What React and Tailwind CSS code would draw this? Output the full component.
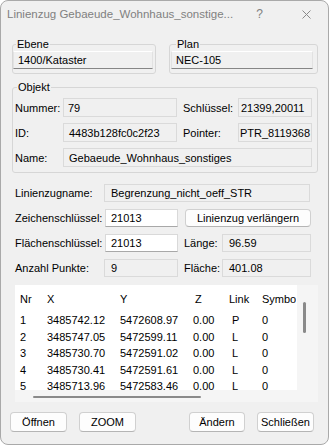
import React from "react";

const rows = [
  ["1", "3485742.12", "5472608.97", "0.00", "P", "0"],
  ["2", "3485747.05", "5472599.11", "0.00", "L", "0"],
  ["3", "3485730.70", "5472591.02", "0.00", "L", "0"],
  ["4", "3485730.41", "5472591.61", "0.00", "L", "0"],
  ["5", "3485713.96", "5472583.46", "0.00", "L", "0"],
];

// read-only field (grey, flat)
function RoField({ className = "", children }) {
  return (
    <div
      className={
        "flex items-center overflow-hidden whitespace-nowrap bg-[#f0f0f0] border border-[#dadada] " +
        className
      }
    >
      {children}
    </div>
  );
}

function WhiteField({ className = "", children }) {
  return (
    <div
      className={
        "flex items-center overflow-hidden whitespace-nowrap bg-white border border-[#d9d9d9] border-b-[#a8a8a8] " +
        className
      }
    >
      {children}
    </div>
  );
}

function Button({ className = "", children }) {
  return (
    <div
      className={
        "flex items-center justify-center bg-[#fdfdfd] border border-[#d0d0d0] border-b-[#b5b5b5] rounded-[4px] whitespace-nowrap " +
        className
      }
    >
      {children}
    </div>
  );
}

export default function App() {
  return (
    <div className="w-[329px] h-[445px] flex flex-col bg-[#f0f0f0] border border-[#a9a9a9] rounded-[8px] overflow-hidden text-[11px] leading-[14px] text-black font-['Liberation_Sans',Arial,sans-serif]">
      {/* title bar */}
      <div className="h-[26px] flex items-center pl-[6px] pr-[17px] text-[11.5px] text-[#808080]">
        <span className="whitespace-nowrap">Linienzug Gebaeude_Wohnhaus_sonstige...</span>
        <span className="ml-auto text-[12px]">?</span>
        <svg className="ml-[39px]" width="9" height="9" viewBox="0 0 9 9">
          <path d="M0.5 0.5 L8.5 8.5 M8.5 0.5 L0.5 8.5" stroke="#8a8a8a" strokeWidth="1" />
        </svg>
      </div>

      <div className="pl-[11px] pr-[10px] mt-[10px]">
        {/* Ebene / Plan */}
        <div className="flex gap-[13px]">
          <fieldset className="w-[144px] border border-[#d6d6d6] rounded-[3px] pl-0 pr-[2px] pb-[4px]">
            <legend className="ml-[3px] px-[1px] leading-[14px]">Ebene</legend>
            <div className="h-[18px] flex items-center pl-[4px] bg-[#f0f0f0] border border-[#e2e2e2] border-t-white border-b-[#868686]">
              1400/Kataster
            </div>
          </fieldset>
          <fieldset className="flex-1 border border-[#d6d6d6] rounded-[3px] pl-[1px] pr-[4px] pb-[4px]">
            <legend className="ml-[5px] px-[1px] leading-[14px]">Plan</legend>
            <div className="h-[18px] flex items-center pl-[4px] bg-[#f0f0f0] border border-[#e2e2e2] border-t-white border-b-[#868686]">
              NEC-105
            </div>
          </fieldset>
        </div>

        {/* Objekt */}
        <fieldset className="mt-[6px] border border-[#d6d6d6] rounded-[3px] pl-[2px] pr-[5px] pt-[4px] pb-[5px]">
          <legend className="ml-[2px] px-[1px] leading-[14px]">Objekt</legend>
          <div className="flex flex-col gap-[6px]">
            <div className="flex items-center">
              <span className="w-[48px]">Nummer:</span>
              <RoField className="w-[114px] h-[19px] pl-[4px]">79</RoField>
              <span className="ml-[6px] w-[55px]">Schlüssel:</span>
              <RoField className="w-[74px] h-[19px] pl-[2px]">21399,20011</RoField>
            </div>
            <div className="flex items-center">
              <span className="w-[48px]">ID:</span>
              <RoField className="w-[114px] h-[19px] pl-[5px]">4483b128fc0c2f23</RoField>
              <span className="ml-[6px] w-[55px]">Pointer:</span>
              <RoField className="w-[74px] h-[19px] justify-end pr-[1px]">PTR_8119368</RoField>
            </div>
            <div className="flex items-center">
              <span className="w-[48px]">Name:</span>
              <RoField className="flex-1 h-[19px] pl-[5px]">Gebaeude_Wohnhaus_sonstiges</RoField>
            </div>
          </div>
        </fieldset>

        {/* Linienzug */}
        <div className="mt-[11px] pl-[3px] flex flex-col gap-[7px]">
          <div className="flex items-center h-[18px]">
            <span className="w-[89px]">Linienzugname:</span>
            <RoField className="w-[206px] h-[18px] pl-[6px]">Begrenzung_nicht_oeff_STR</RoField>
          </div>
          <div className="flex items-center h-[18px]">
            <span className="w-[89px]">Zeichenschlüssel:</span>
            <WhiteField className="ml-[1px] w-[73px] h-[18px] pl-[5px]">21013</WhiteField>
            <Button className="ml-[7px] w-[126px] h-[18px]">Linienzug verlängern</Button>
          </div>
          <div className="flex items-center h-[18px]">
            <span className="w-[89px]">Flächenschlüssel:</span>
            <WhiteField className="ml-[1px] w-[73px] h-[18px] pl-[5px]">21013</WhiteField>
            <span className="ml-[6px] w-[38px]">Länge:</span>
            <RoField className="w-[89px] h-[18px] pl-[6px]">96.59</RoField>
          </div>
          <div className="flex items-center h-[18px]">
            <span className="w-[89px]">Anzahl Punkte:</span>
            <RoField className="w-[74px] h-[18px] pl-[6px]">9</RoField>
            <span className="ml-[6px] w-[38px]">Fläche:</span>
            <RoField className="w-[89px] h-[18px] pl-[6px]">401.08</RoField>
          </div>
        </div>

        {/* point list */}
        <div className="relative mt-[8px] ml-[3px] w-[303px] h-[117px] bg-[#f5f5f5]">
          <div className="w-[282px] h-[105px] bg-white overflow-hidden">
            <div className="h-[27px] flex items-center pl-[5px] whitespace-nowrap">
              <span className="w-[27px]">Nr</span>
              <span className="w-[73px]">X</span>
              <span className="w-[73px]">Y</span>
              <span className="w-[36px] pl-[2px]">Z</span>
              <span className="w-[33px]">Link</span>
              <span className="w-[34px] overflow-hidden">Symbo</span>
            </div>
            {rows.map((r) => (
              <div key={r[0]} className="h-[16.5px] flex items-center pl-[5px] whitespace-nowrap">
                <span className="w-[27px]">{r[0]}</span>
                <span className="w-[73px]">{r[1]}</span>
                <span className="w-[73px]">{r[2]}</span>
                <span className="w-[36px]">{r[3]}</span>
                <span className="w-[33px] pl-[3px]">{r[4]}</span>
                <span className="w-[34px]">{r[5]}</span>
              </div>
            ))}
          </div>
          <div className="absolute left-[288px] top-[17px] w-[3px] h-[31px] rounded-full bg-[#8a8a8a]" />
          <div className="absolute left-[18px] top-[111px] w-[168px] h-[2px] rounded-full bg-[#8a8a8a]" />
        </div>
      </div>

      {/* bottom buttons */}
      <div className="mt-[10px] pl-[9px] flex">
        <Button className="w-[57px] h-[20px]">Öffnen</Button>
        <Button className="ml-[12px] w-[57px] h-[20px]">ZOOM</Button>
        <Button className="ml-[53px] w-[56px] h-[20px]">Ändern</Button>
        <Button className="ml-[12px] w-[57px] h-[20px]">Schließen</Button>
      </div>
    </div>
  );
}
